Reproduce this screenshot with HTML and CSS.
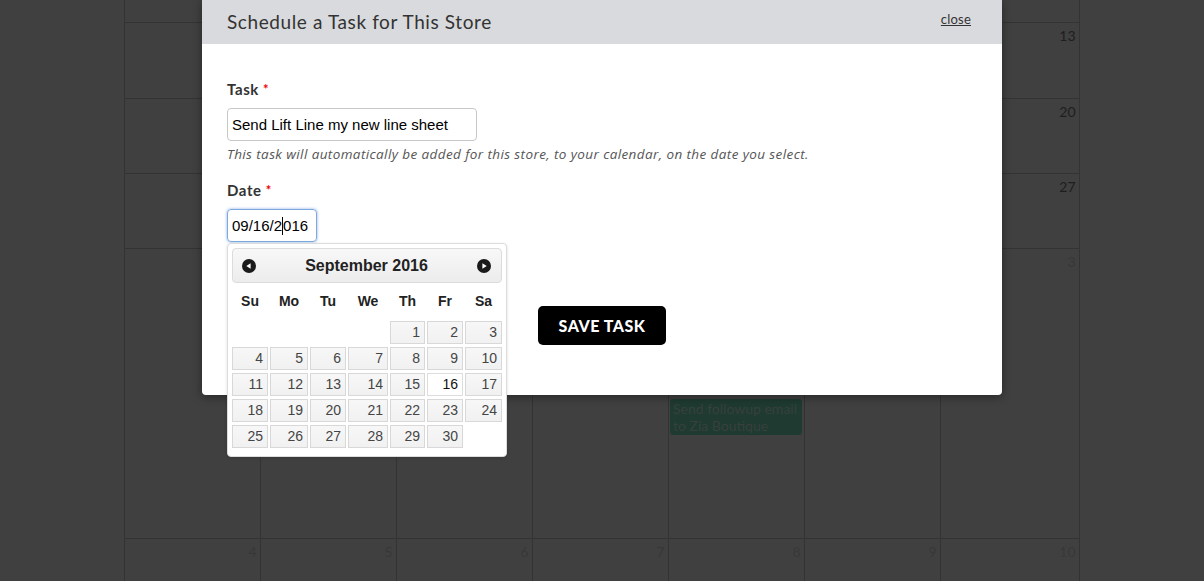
FILE: index.html
```html
<!DOCTYPE html>
<html lang="en">
<head>
    <meta charset="UTF-8">
    <meta name="viewport" content="width=device-width, initial-scale=1.0">
    <title>Schedule a Task for This Store</title>
    <link rel="stylesheet" href="styles.css">
</head>
<body>
    <!-- Calendar behind the overlay (August 2016) -->
    <div class="calendar">
        <div class="week week-top">
            <div class="day"></div>
            <div class="day"></div>
            <div class="day"></div>
            <div class="day"></div>
            <div class="day"></div>
            <div class="day"></div>
            <div class="day"></div>
        </div>
        <div class="week">
            <div class="day"><span class="num">7</span></div>
            <div class="day"><span class="num">8</span></div>
            <div class="day"><span class="num">9</span></div>
            <div class="day"><span class="num">10</span></div>
            <div class="day"><span class="num">11</span></div>
            <div class="day"><span class="num">12</span></div>
            <div class="day"><span class="num">13</span></div>
        </div>
        <div class="week week-short">
            <div class="day"><span class="num">14</span></div>
            <div class="day"><span class="num">15</span></div>
            <div class="day"><span class="num">16</span></div>
            <div class="day"><span class="num">17</span></div>
            <div class="day"><span class="num">18</span></div>
            <div class="day"><span class="num">19</span></div>
            <div class="day"><span class="num">20</span></div>
        </div>
        <div class="week week-short">
            <div class="day"><span class="num">21</span></div>
            <div class="day"><span class="num">22</span></div>
            <div class="day"><span class="num">23</span></div>
            <div class="day"><span class="num">24</span></div>
            <div class="day"><span class="num">25</span></div>
            <div class="day"><span class="num">26</span></div>
            <div class="day"><span class="num">27</span></div>
        </div>
        <div class="week week-tall">
            <div class="day"><span class="num">28</span></div>
            <div class="day"><span class="num">29</span></div>
            <div class="day"><span class="num">30</span></div>
            <div class="day"><span class="num">31</span></div>
            <div class="day other"><span class="num">1</span>
                <div class="event">Send followup email to Zia Boutique</div>
            </div>
            <div class="day other"><span class="num">2</span></div>
            <div class="day other"><span class="num">3</span></div>
        </div>
        <div class="week week-last">
            <div class="day other"><span class="num">4</span></div>
            <div class="day other"><span class="num">5</span></div>
            <div class="day other"><span class="num">6</span></div>
            <div class="day other"><span class="num">7</span></div>
            <div class="day other"><span class="num">8</span></div>
            <div class="day other"><span class="num">9</span></div>
            <div class="day other"><span class="num">10</span></div>
        </div>
    </div>

    <!-- Modal -->
    <div class="modal">
        <div class="modal-header">
            <h2>Schedule a Task for This Store</h2>
            <a href="#" class="close">close</a>
        </div>
        <div class="modal-body">
            <label class="field-label">Task<span class="req">*</span></label>
            <div class="text-input task-input">Send Lift Line my new line sheet</div>
            <p class="help">This task will automatically be added for this store, to your calendar, on the date you select.</p>

            <label class="field-label date-label">Date<span class="req">*</span></label>
            <div class="date-field">
                <div class="text-input date-input">09/16/2<span class="caret"></span>016</div>

                <div class="datepicker">
                    <div class="dp-header">
                        <svg class="dp-arrow" width="14" height="14" viewBox="0 0 14 14"><circle cx="7" cy="7" r="7" fill="#1a1a1a"/><path d="M4.3 7 L8.6 4.2 L8.6 9.8 Z" fill="#fff"/></svg>
                        <span class="dp-title">September 2016</span>
                        <svg class="dp-arrow" width="14" height="14" viewBox="0 0 14 14"><circle cx="7" cy="7" r="7" fill="#1a1a1a"/><path d="M9.7 7 L5.4 4.2 L5.4 9.8 Z" fill="#fff"/></svg>
                    </div>
                    <div class="dp-grid">
                        <div class="dow">Su</div>
                        <div class="dow">Mo</div>
                        <div class="dow">Tu</div>
                        <div class="dow">We</div>
                        <div class="dow">Th</div>
                        <div class="dow">Fr</div>
                        <div class="dow">Sa</div>

                        <div class="empty"></div>
                        <div class="empty"></div>
                        <div class="empty"></div>
                        <div class="empty"></div>
                        <div class="cell">1</div>
                        <div class="cell">2</div>
                        <div class="cell">3</div>

                        <div class="cell">4</div>
                        <div class="cell">5</div>
                        <div class="cell">6</div>
                        <div class="cell">7</div>
                        <div class="cell">8</div>
                        <div class="cell">9</div>
                        <div class="cell">10</div>

                        <div class="cell">11</div>
                        <div class="cell">12</div>
                        <div class="cell">13</div>
                        <div class="cell">14</div>
                        <div class="cell">15</div>
                        <div class="cell active">16</div>
                        <div class="cell">17</div>

                        <div class="cell">18</div>
                        <div class="cell">19</div>
                        <div class="cell">20</div>
                        <div class="cell">21</div>
                        <div class="cell">22</div>
                        <div class="cell">23</div>
                        <div class="cell">24</div>

                        <div class="cell">25</div>
                        <div class="cell">26</div>
                        <div class="cell">27</div>
                        <div class="cell">28</div>
                        <div class="cell">29</div>
                        <div class="cell">30</div>
                        <div class="empty"></div>
                    </div>
                </div>
            </div>

            <div class="actions">
                <button class="save-btn">SAVE TASK</button>
            </div>
        </div>
    </div>
</body>
</html>
```

FILE: styles.css
```css
* {
    box-sizing: border-box;
}

html {
    overflow: hidden;
}

body {
    margin: 0;
    background-color: #404040;
    font-family: Lato, "Open Sans", sans-serif;
    overflow: hidden;
    height: 581px;
}

/* background calendar */
.calendar {
    margin-top: -53px;
    margin-left: 124px;
    width: 956px;
    border-left: 1px solid #333;
    border-right: 1px solid #333;
}

.week {
    display: grid;
    grid-template-columns: 135px repeat(5, 136px) 1fr;
    height: 76px;
}

.week-short {
    height: 75px;
}

.week-tall {
    height: 290px;
}

.week-last {
    height: 43px;
}

.week-last .day {
    border-bottom: none;
}

.day {
    border-left: 1px solid #333;
    border-bottom: 1px solid #333;
    padding: 4px 3px 0 1px;
    text-align: right;
}

.day:first-child {
    border-left: none;
}

.num {
    display: block;
    font-size: 14px;
    line-height: 18px;
    color: #1e1e1e;
    letter-spacing: 0.3px;
}

.other .num {
    color: #383838;
}

.event {
    margin-top: 128px;
    margin-right: -1px;
    background-color: #1e3a31;
    color: #38403c;
    border-radius: 3px;
    text-align: left;
    font-size: 14px;
    line-height: 17px;
    padding: 1px 3px;
}

/* modal */
.modal {
    position: absolute;
    left: 202px;
    top: 0;
    width: 800px;
    background-color: #fff;
    border-radius: 0 0 4px 4px;
    box-shadow: 0 2px 10px rgba(0, 0, 0, 0.4);
    z-index: 10;
}

.modal-header {
    height: 44px;
    background-color: #d9dadd;
    display: flex;
    align-items: center;
    justify-content: space-between;
    padding: 0 31px 0 25px;
}

.modal-header h2 {
    margin: -2px 0 0;
    font-size: 19px;
    font-weight: 400;
    letter-spacing: 0.6px;
    color: #333;
}

.close {
    font-size: 13px;
    letter-spacing: 0.2px;
    color: #333;
    text-decoration: underline;
    margin-top: -6px;
}

.modal-body {
    padding: 36px 25px 50px;
}

.field-label {
    display: block;
    font-size: 15px;
    line-height: 18px;
    font-weight: 700;
    letter-spacing: 0.6px;
    color: #333;
    margin-bottom: 10px;
}

.req {
    color: #e00;
    font-size: 13px;
    vertical-align: top;
    margin-left: 4px;
}

.date-label {
    margin-top: 19px;
}

.text-input {
    height: 33px;
    border: 1px solid #c8c8c8;
    border-radius: 4px;
    padding: 0 4px;
    font-family: "Liberation Sans", Arial, sans-serif;
    font-size: 15px;
    line-height: 31px;
    color: #000;
}

.task-input {
    width: 250px;
}

.help {
    margin: 5px 0 0;
    font-family: "Open Sans", Lato, sans-serif;
    font-size: 13.5px;
    letter-spacing: 0.4px;
    line-height: 16px;
    font-style: italic;
    color: #555;
}

.date-field {
    position: relative;
}

.date-input {
    width: 90px;
    border-color: #7fa9dc;
    box-shadow: 0 0 3px rgba(82, 140, 220, 0.7);
}

.caret {
    display: inline-block;
    width: 1px;
    height: 18px;
    background-color: #000;
    vertical-align: -4px;
}

/* datepicker */
.datepicker {
    position: absolute;
    left: 0;
    top: 34px;
    width: 280px;
    background-color: #fff;
    border: 1px solid #dcdcdc;
    border-radius: 4px;
    padding: 4px 4px 8px;
    box-shadow: 0 1px 3px rgba(0, 0, 0, 0.15);
    font-family: "Liberation Sans", Arial, sans-serif;
    z-index: 20;
}

.dp-header {
    height: 35px;
    border: 1px solid #dcdcdc;
    border-radius: 4px;
    background: linear-gradient(#f8f8f8, #ececec);
    display: flex;
    align-items: center;
    justify-content: space-between;
    padding: 0 10px 0 9px;
}

.dp-arrow {
    display: block;
}

.dp-title {
    font-size: 16px;
    font-weight: 700;
    color: #222;
}

.dp-grid {
    display: grid;
    grid-template-columns: 36px 38px 36px 40px 35px 36px 37px;
    grid-template-rows: 35px;
    grid-auto-rows: 23px;
    column-gap: 2px;
    row-gap: 3px;
}

.dow {
    font-size: 14px;
    font-weight: 700;
    color: #222;
    text-align: center;
    line-height: 36px;
}

.cell {
    border: 1px solid #d8d8d8;
    background: linear-gradient(#f7f7f7, #f1f1f1);
    color: #454545;
    font-size: 14px;
    line-height: 21px;
    text-align: right;
    padding-right: 4px;
}

.cell.active {
    background: #fff;
    border-color: #dddddd;
    color: #111;
}

.actions {
    margin-top: 64px;
    text-align: center;
}

.save-btn {
    width: 128px;
    height: 39px;
    background-color: #000;
    color: #fff;
    border: none;
    border-radius: 5px;
    font-family: Lato, sans-serif;
    font-weight: 900;
    font-size: 16px;
    letter-spacing: 0.5px;
    cursor: pointer;
}
```
